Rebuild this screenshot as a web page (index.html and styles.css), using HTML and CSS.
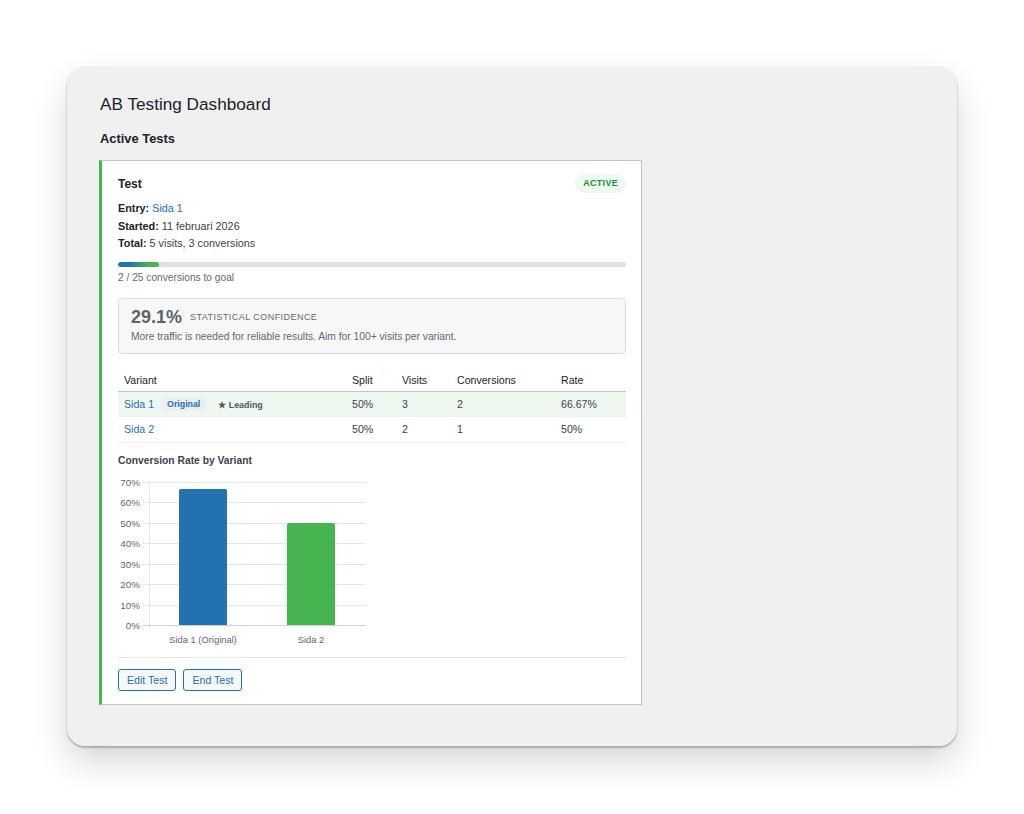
FILE: index.html
```html
<!DOCTYPE html>
<html lang="en">
<head>
<meta charset="utf-8">
<title>AB Testing Dashboard</title>
<link rel="stylesheet" href="styles.css">
</head>
<body>
<div class="window">
  <h1 class="title">AB Testing Dashboard</h1>
  <h2 class="section">Active Tests</h2>
  <div class="card">
    <div class="card-head">
      <h3 class="card-title">Test</h3>
      <span class="badge">Active</span>
    </div>
    <div class="meta">
      <div><b>Entry:</b> <a class="link">Sida 1</a></div>
      <div><b>Started:</b> 11 februari 2026</div>
      <div><b>Total:</b> 5 visits, 3 conversions</div>
    </div>
    <div class="progress"><div class="fill" style="width:8%"></div></div>
    <div class="goal">2 / 25 conversions to goal</div>
    <div class="confidence">
      <div class="conf-top"><span class="conf-num">29.1%</span><span class="conf-label">Statistical confidence</span></div>
      <div class="conf-note">More traffic is needed for reliable results. Aim for 100+ visits per variant.</div>
    </div>
    <table class="variants">
      <colgroup>
        <col class="c-variant"><col class="c-split"><col class="c-visits"><col class="c-conv"><col class="c-rate">
      </colgroup>
      <thead>
        <tr><th>Variant</th><th>Split</th><th>Visits</th><th>Conversions</th><th>Rate</th></tr>
      </thead>
      <tbody>
        <tr class="leading">
          <td><a class="link">Sida 1</a><span class="pill">Original</span><span class="lead">★ Leading</span></td>
          <td>50%</td><td>3</td><td>2</td><td>66.67%</td>
        </tr>
        <tr>
          <td><a class="link">Sida 2</a></td>
          <td>50%</td><td>2</td><td class="num">1</td><td>50%</td>
        </tr>
      </tbody>
    </table>
    <h4 class="chart-title">Conversion Rate by Variant</h4>
    <svg class="chart" width="260" height="182" viewBox="0 0 260 182">
      <g class="grid">
        <line x1="25" y1="13.5" x2="248" y2="13.5"/>
        <line x1="25" y1="33.5" x2="248" y2="33.5"/>
        <line x1="25" y1="54.5" x2="248" y2="54.5"/>
        <line x1="25" y1="74.5" x2="248" y2="74.5"/>
        <line x1="25" y1="95.5" x2="248" y2="95.5"/>
        <line x1="25" y1="115.5" x2="248" y2="115.5"/>
        <line x1="25" y1="136.5" x2="248" y2="136.5"/>
        <line x1="31.5" y1="13" x2="31.5" y2="160"/>
      </g>
      <line class="axis" x1="25" y1="156.5" x2="248" y2="156.5"/>
      <g class="ylab">
        <text x="22" y="17">70%</text>
        <text x="22" y="37">60%</text>
        <text x="22" y="58">50%</text>
        <text x="22" y="78">40%</text>
        <text x="22" y="99">30%</text>
        <text x="22" y="119">20%</text>
        <text x="22" y="140">10%</text>
        <text x="22" y="160">0%</text>
      </g>
      <path class="bar-a" d="M61 156 V22 a2 2 0 0 1 2 -2 H107 a2 2 0 0 1 2 2 V156 Z"/>
      <path class="bar-b" d="M169 156 V56 a2 2 0 0 1 2 -2 H215 a2 2 0 0 1 2 2 V156 Z"/>
      <g class="xlab">
        <text x="85" y="174">Sida 1 (Original)</text>
        <text x="193" y="174">Sida 2</text>
      </g>
    </svg>
    <div class="actions">
      <button class="btn">Edit Test</button>
      <button class="btn">End Test</button>
    </div>
  </div>
</div>
</body>
</html>
```

FILE: styles.css
```css
html, body {
  margin: 0;
  padding: 0;
  background: #ffffff;
}

body {
  font-family: "Liberation Sans", Arial, sans-serif;
  color: #1d2327;
  padding: 67px 67px 68px 67px;
}

.window {
  box-sizing: border-box;
  width: 890px;
  height: 679px;
  background: #f0f0f1;
  border-radius: 18px;
  padding: 26px 32px 0 32px;
  box-shadow: 0 0 0 1px rgba(0, 0, 0, 0.03), 0 2px 2px rgba(0, 0, 0, 0.22), 0 16px 34px rgba(0, 0, 0, 0.16);
}

.title {
  margin: 0 0 0 1px;
  font-size: 17.2px;
  font-weight: 400;
  line-height: 23px;
  color: #1d2327;
}

.section {
  margin: 14px 0 0 1px;
  font-size: 12.9px;
  font-weight: 700;
  line-height: 18px;
  color: #1d2327;
}

.card {
  box-sizing: border-box;
  width: 543px;
  margin-top: 12px;
  background: #ffffff;
  border: 1px solid #c3c4c7;
  border-left: 3px solid #46b450;
  padding: 13px 15px 13px 16px;
}

.card-head {
  display: flex;
  justify-content: space-between;
  align-items: center;
  height: 19px;
}

.card-title {
  margin: 0;
  font-size: 12px;
  font-weight: 700;
  color: #1d2327;
}

.badge {
  display: inline-block;
  background: #edfaef;
  color: #2a8b3c;
  font-size: 9px;
  font-weight: 700;
  letter-spacing: 0.3px;
  text-transform: uppercase;
  line-height: 19px;
  padding: 0 8px;
  border-radius: 10px;
}

.meta {
  margin-top: 7px;
  font-size: 10.8px;
  line-height: 17.5px;
  color: #3c434a;
}

.meta b {
  color: #1d2327;
}

.link {
  color: #2271b1;
  text-decoration: none;
}

.progress {
  margin-top: 9px;
  height: 5px;
  background: #e0e0e0;
  border-radius: 3px;
  overflow: hidden;
}

.fill {
  height: 100%;
  border-radius: 3px;
  background: linear-gradient(90deg, #2271b1 0%, #2271b1 25%, #46b450 75%, #46b450 100%);
}

.goal {
  margin-top: 3px;
  font-size: 10.2px;
  line-height: 15px;
  color: #646970;
}

.confidence {
  margin-top: 13px;
  background: #f6f7f7;
  border: 1px solid #dcdcde;
  border-radius: 4px;
  padding: 8px 12px 8px 12px;
}

.conf-top {
  display: flex;
  align-items: center;
  gap: 8px;
  height: 20px;
}

.conf-num {
  font-size: 18px;
  font-weight: 700;
  line-height: 20px;
  color: #5f6368;
}

.conf-label {
  font-size: 9px;
  letter-spacing: 0.45px;
  text-transform: uppercase;
  color: #646970;
}

.conf-note {
  margin-top: 2px;
  font-size: 10.25px;
  line-height: 16px;
  color: #646970;
}

.variants {
  width: 100%;
  margin-top: 15px;
  border-collapse: collapse;
  table-layout: fixed;
  font-size: 10.6px;
}

.c-variant { width: 228px; }
.c-split { width: 50px; }
.c-visits { width: 55px; }
.c-conv { width: 104px; }
.c-rate { width: auto; }

.variants th {
  text-align: left;
  font-weight: 400;
  color: #1d2327;
  height: 22px;
  padding: 0 6px;
  border-bottom: 1px solid #c3c4c7;
}

.variants td {
  padding: 0 6px;
  color: #3c434a;
  border-bottom: 1px solid #f0f0f1;
}

.variants td.num {
  color: #3c434a;
}

.variants tbody tr:first-child td {
  height: 24px;
}

.variants tbody tr:last-child td {
  height: 25px;
}

.variants tr.leading td {
  background: #eff8f0;
}

.pill {
  display: inline-block;
  margin-left: 6px;
  padding: 0 7px;
  line-height: 14px;
  border-radius: 8px;
  background: #eceef1;
  color: #2271b1;
  font-size: 8.8px;
  font-weight: 700;
  vertical-align: 1px;
}

.lead {
  margin-left: 11px;
  font-size: 8.9px;
  font-weight: 700;
  color: #50575e;
}

.chart-title {
  margin: 10px 0 0 0;
  font-size: 10.3px;
  font-weight: 700;
  line-height: 15px;
  color: #3c434a;
}

.chart {
  display: block;
  margin-top: 1px;
}

.grid line {
  stroke: #e6e6e6;
  stroke-width: 1;
}

.axis {
  stroke: #d0d0d0;
  stroke-width: 1;
}

.ylab text {
  font-family: "Liberation Sans", Arial, sans-serif;
  font-size: 9.9px;
  fill: #666666;
  text-anchor: end;
}

.xlab text {
  font-family: "Liberation Sans", Arial, sans-serif;
  font-size: 9.4px;
  fill: #666666;
  text-anchor: middle;
}

.bar-a { fill: #2271b1; }
.bar-b { fill: #46b450; }

.actions {
  display: flex;
  gap: 7px;
  margin-top: 6px;
  padding-top: 11px;
  border-top: 1px solid #e2e4e7;
}

.btn {
  box-sizing: border-box;
  height: 22px;
  padding: 0 8px;
  border: 1px solid #2271b1;
  border-radius: 3px;
  background: #f6f7f7;
  color: #2271b1;
  font-family: "Liberation Sans", Arial, sans-serif;
  font-size: 10.6px;
  line-height: 20px;
}
```
